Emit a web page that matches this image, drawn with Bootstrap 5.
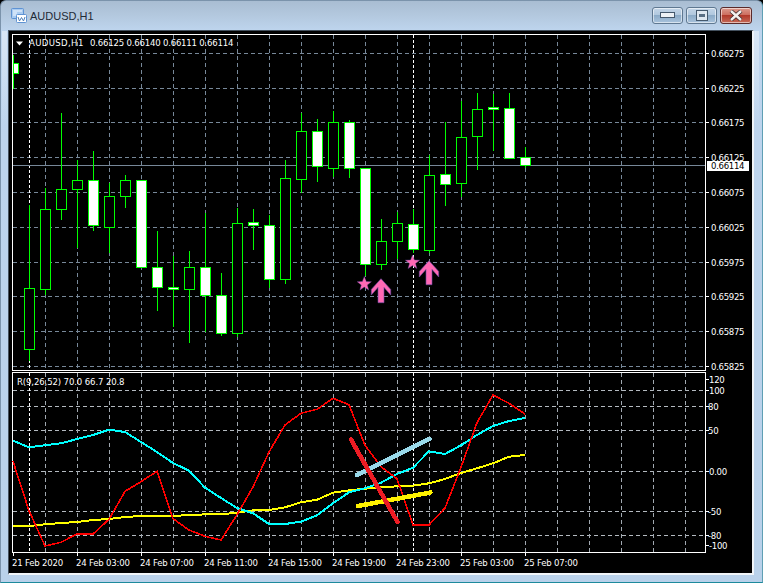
<!DOCTYPE html>
<html lang="en">
<head>
<meta charset="utf-8">
<title>AUDUSD,H1</title>
<link href="https://cdn.jsdelivr.net/npm/bootstrap@5.3.0/dist/css/bootstrap.min.css" rel="stylesheet">
<style>
html,body{height:100%;background:#000;overflow:hidden;margin:0}
.mt-window{width:763px;height:583px;border-radius:6px 6px 0 0;border:1px solid #7b93ab;border-bottom-color:#1d8a9c;border-right-color:#5f9fb4;padding:0 6px 6px 7px;
 background:linear-gradient(180deg,rgba(240,246,252,.55),rgba(240,246,252,0)) 1px 30px/5px 95px no-repeat,linear-gradient(180deg,rgba(240,246,252,.55),rgba(240,246,252,0)) 753px 30px/5px 95px no-repeat,linear-gradient(180deg,#a9bdd2 0,#b3c8de 14px,#bed5ee 30px,#b9d1ea 100%)}
.mt-title{height:29px;font:11px "Liberation Sans",sans-serif;color:#1f2a36;padding-left:3px}
.mt-title-text{margin-left:3px}
.mt-ctl{width:31px;height:17px;border:1px solid #5f7891;border-radius:3px;background:linear-gradient(180deg,#c4d6e8 0,#b1c8de 45%,#8cabc8 50%,#a9c3dc 100%);box-shadow:inset 0 0 0 1px rgba(255,255,255,.55)}
.mt-ctl-close{width:32px;border-color:#5a2a2a;background:linear-gradient(180deg,#dc9b8e 0,#cd6f60 45%,#b23a2b 50%,#c56a58 100%)}
.mt-ctls{margin-right:4px;margin-top:-1px;gap:3px}
.mt-client{width:746px;height:545px;background:#000;border-style:solid;border-color:#44515e #f0f4f8 #f0f4f8 #44515e;border-width:1px 2px 2px 1px}
.mt-pane{display:block;flex:none}
.mt-time{height:17px;padding-left:3px;font:9.5px "DejaVu Sans Condensed","Liberation Sans",sans-serif;letter-spacing:-.2px;color:#fff;line-height:13px}
.mt-time>span{width:64px;flex:none;white-space:nowrap}
svg text{font:9.5px "DejaVu Sans Condensed","Liberation Sans",sans-serif;fill:#fff}
</style>
</head>
<body>
<div class="mt-window d-flex flex-column">
  <div class="mt-title d-flex align-items-center">
    <svg width="16" height="15" viewBox="0 0 16 15" aria-hidden="true"><rect x=".5" y=".5" width="12" height="10" rx="1" fill="#a9cbf0" stroke="#5f93d3"/><path d="M2 3h9M2 5h4M2 7h3" stroke="#f4f9ff"/><rect x="5.5" y="6.5" width="10" height="8" rx="1" fill="#fff" stroke="#5f93d3"/><path d="M7 9l1.5 4L10.500 9.500 12.500 13 14 9" fill="none" stroke="#4f7fb8"/></svg>
    <span class="mt-title-text">AUDUSD,H1</span>
    <div class="mt-ctls d-flex ms-auto">
      <div class="mt-ctl d-flex align-items-center justify-content-center"><svg width="15" height="6" aria-hidden="true"><rect x=".5" y=".5" width="14" height="5" fill="#eef2f6" stroke="#44586c"/></svg></div>
      <div class="mt-ctl d-flex align-items-center justify-content-center"><svg width="12" height="11" aria-hidden="true"><rect x=".5" y=".5" width="11" height="10" fill="#dfe8f1" stroke="#44586c"/><rect x="3" y="4" width="6" height="3" fill="#5a6f84"/></svg></div>
      <div class="mt-ctl mt-ctl-close d-flex align-items-center justify-content-center"><svg width="16" height="11" aria-hidden="true"><path d="M3 1l10 9M13 1L3 10" stroke="#3a2a2a" stroke-width="4"/><path d="M3 1l10 9M13 1L3 10" stroke="#f4f0ee" stroke-width="2.400"/></svg></div>
    </div>
  </div>
  <div class="mt-client d-flex flex-column">
    <svg id="mainPane" class="mt-pane" width="743" height="340" viewBox="9 31 743 340" shape-rendering="crispEdges"></svg>
    <svg id="subPane" class="mt-pane" width="743" height="185" viewBox="9 371 743 185" shape-rendering="crispEdges"></svg>
    <div class="mt-time d-flex">
      <span>21 Feb 2020</span><span>24 Feb 03:00</span><span>24 Feb 07:00</span><span>24 Feb 11:00</span><span>24 Feb 15:00</span><span>24 Feb 19:00</span><span>24 Feb 23:00</span><span>25 Feb 03:00</span><span>25 Feb 07:00</span>
    </div>
  </div>
</div>
<script src="https://cdn.jsdelivr.net/npm/bootstrap@5.3.0/dist/js/bootstrap.bundle.min.js"></script>
<script>
(function(){
var G='#00ff00',P='#ff69b4',E='#6a4aa8',LS='letter-spacing="-.3"';
function vgrid(y1,y2,col){var s='';for(var x=45;x<=685;x+=32)s+='<path d="M'+(x+.5)+' '+y1+'V'+y2+'" stroke="'+col+'" stroke-dasharray="4 3"/>';
 [29,413].forEach(function(x){s+='<path d="M'+(x+.5)+' '+y1+'V'+y2+'" stroke="#fff" stroke-dasharray="3 2"/>'});return s}
function hgrid(ys,col){return ys.map(function(y){return '<path d="M13 '+(y+.5)+'H705" stroke="'+col+'" stroke-dasharray="4 3"/>'}).join('')}
function tick(ys){return ys.map(function(y){return '<path d="M706 '+(y+.5)+'H709" stroke="#fff"/>'}).join('')}
function label(x,y,t,extra){return '<text x="'+x+'" y="'+y+'" shape-rendering="auto" '+(extra||'')+'>'+t+'</text>'}
var ch=[ // cx,wickTop,wickBot,bodyTop,bodyBot,white
[13,55,89,63,73,1],[29,205,361,288,349,0],[45,188,295,209,289,0],[61,113,220,189,209,0],[77,160,248,180,189,0],[93,151,231,180,225,1],[109,183,253,196,227,0],[125,175,208,180,196,0],[141,180,267,180,267,1],[157,231,311,267,287,1],[173,256,327,287,289,1],[189,251,343,267,289,0],[205,213,332,267,295,1],[221,273,336,295,333,1],[237,208,337,223,333,0],[253,209,250,222,225,1],[269,215,288,225,279,1],[285,160,284,178,279,0],[301,113,193,131,179,0],[317,119,182,131,166,1],[333,111,177,122,168,0],[349,120,178,122,168,1],[365,168,276,168,264,1],[381,219,270,241,264,0],[397,212,259,223,241,0],[413,209,253,224,249,1],[429,155,253,175,250,0],[445,122,206,174,184,1],[461,101,197,137,183,0],[477,93,170,109,136,0],[493,94,151,107,109,1],[509,93,158,108,158,1],[525,147,168,157,165,1]];
var prices=[['0.66275',53],['0.66225',88],['0.66175',122],['0.66125',157],['0.66075',192],['0.66025',227],['0.65975',262],['0.65925',296],['0.65875',331],['0.65825',366]];
var m='<path d="M12.500 34.500H705.500V370.500H12.500Z" fill="none" stroke="#fff"/>';
m+=hgrid(prices.map(function(p){return p[1]}),'#778899')+vgrid(35,370,'#778899');
m+='<path d="M13 165.500H705" stroke="#778899"/>';
ch.forEach(function(c){var x=c[0]+.5;
 if(c[0]==13){m+='<path d="M13.500 '+c[1]+'V'+c[2]+'" stroke="'+G+'"/><rect x="13" y="'+(c[3]+.5)+'" width="5" height="'+(c[4]-c[3])+'" fill="#fff" stroke="'+G+'"/>';return}
 m+='<path d="M'+x+' '+c[1]+'V'+c[2]+'" stroke="'+G+'"/>';
 m+='<rect x="'+(c[0]-4.5)+'" y="'+(c[3]+.5)+'" width="10" height="'+(c[4]-c[3])+'" fill="'+(c[5]?'#fff':'#000')+'" stroke="'+G+'"/>'});
function arrow(x,y){return '<path shape-rendering="auto" d="M'+x+' '+y+'l9.700 10.700v5.600l-6.700-7.600v15.300h-6v-15.300l-6.700 7.600v-5.600z" fill="'+P+'" stroke="'+E+'" stroke-width=".6"/>'}
function star(cx,cy,R){var p=[];for(var i=0;i<10;i++){var r=i%2?R*.42:R,a=-Math.PI/2+i*Math.PI/5;p.push((cx+r*Math.cos(a)).toFixed(1)+','+(cy+r*Math.sin(a)).toFixed(1))}
 return '<polygon shape-rendering="auto" points="'+p.join(' ')+'" fill="'+P+'" stroke="'+E+'" stroke-width=".4"/>'}
m+=star(364.3,284,7.500)+star(412.500,262.500,7.500)+arrow(381,278.700)+arrow(429,260.700);
m+=tick(prices.map(function(p){return p[1]}));
prices.forEach(function(p){m+=label(711,p[1]+4,p[0],LS)});
m+='<rect x="706.500" y="160.500" width="42" height="10" fill="#fff"/>'+label(711,169,'0.66114',LS+' style="fill:#000"');
m+='<path d="M16 41.500h7l-3.500 4z" fill="#fff" shape-rendering="auto"/>';
m+=label(29,46,'AUDUSD,H1','letter-spacing=".35"')+label(90,46,'0.66125 0.66140 0.66111 0.66114','letter-spacing="-.2"');
document.getElementById('mainPane').innerHTML=m;

var s='<path d="M12.500 372.500H705.500V552.500H12.500Z" fill="none" stroke="#fff"/>';
var subs=[['120',379,709,0],['100',390,709,1],['80',406,708,1],['50',430,708,1],['0.00',471,709,1],['-50',511,708,1],['-80',535,708,1],['-100',545,709,0]];
var sg=subs.filter(function(a){return a[3]}).map(function(a){return a[1]});
s+=hgrid(sg,'#b4bac0')+vgrid(373,552,'#a0a8b0');
var xs=[];for(var x=13;x<=525;x+=16)xs.push(x);
function line(ys,col,w){return '<polyline fill="none" stroke="'+col+'" stroke-width="'+w+'" points="'+ys.map(function(y,i){return xs[i]+','+y}).join(' ')+'"/>'}
var red=[461.3,510.7,546,542.3,534,534,519.3,491.3,481.7,471.3,518.7,530,536.3,540,514.7,487,452,425,413.3,409.3,398.3,404.7,445.3,466.7,478.7,525,525,508,467.3,422.7,395,403.3,414];
var cyan=[440.7,447.3,445.3,443.3,439,435,429.7,432,442,452,463,470.7,487.7,498,508,513.3,524,524,521.7,515.3,503.3,492.3,488.3,482.7,474,467.7,451.3,454,445.3,435,426,421,418];
var yel=[526,526,524.3,523,522,520,519,517,516,515.7,515.7,515.3,514.3,514.3,512.7,510.3,510,507.3,502.3,499.7,492.7,490.3,488.7,487.3,486.3,485.700,483.3,479,473,468.3,463.3,456.7,455];
s+=line(yel,'#ffff00',2)+line(cyan,'#00ffff',2)+line(red,'#ff0000',1.6);
s+='<path d="M357 475L429.500 439" stroke="#99d9ea" stroke-width="4.500" stroke-linecap="round"/>';
s+='<path d="M358 506L430.500 492.500" stroke="#fff200" stroke-width="4.500" stroke-linecap="round"/>';
s+='<path d="M351 439.500L397.500 522" stroke="#ed1c24" stroke-width="4.500" stroke-linecap="round"/>';
s+=tick(subs.map(function(a){return a[1]}));
subs.forEach(function(a){s+=label(a[2],a[1]+4,a[0],LS)});
for(var tx=13;tx<=525;tx+=64)s+='<path d="M'+(tx+.5)+' 553V556" stroke="#fff"/>';
s+=label(17,385,'R(9,26,52) 70.0 66.7 20.8','letter-spacing="-.12"');
document.getElementById('subPane').innerHTML=s;
})();
</script>
</body>
</html>
